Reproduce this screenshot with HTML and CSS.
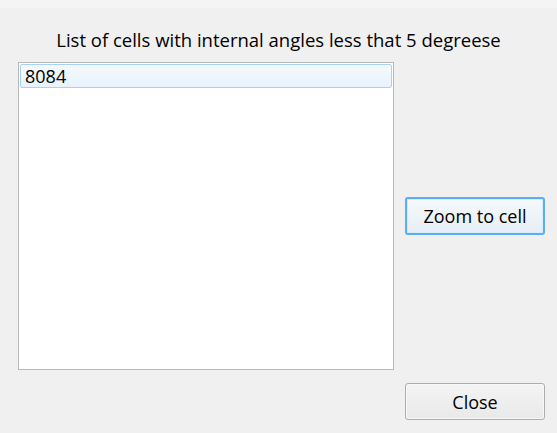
FILE: index.html
```html
<!DOCTYPE html>
<html>
<head>
<meta charset="utf-8">
<link rel="stylesheet" href="styles.css">
</head>
<body>
<div class="window">
  <div class="topbar"></div>
  <div class="content">
    <div class="title">List of cells with internal angles less that 5 degreese</div>
    <div class="main">
      <div class="list">
        <div class="item selected">8084</div>
      </div>
      <div class="side">
        <button class="btn default">Zoom to cell</button>
      </div>
    </div>
    <div class="footer">
      <button class="btn close">Close</button>
    </div>
  </div>
</div>
</body>
</html>
```
FILE: styles.css
```css
html, body {
  margin: 0;
  padding: 0;
}
body {
  background: #f0f0f0;
  font-family: "Open Sans", "Noto Sans", sans-serif;
  font-size: 18px;
  color: #000;
}
.window {
  width: 557px;
  height: 433px;
  background: #f0f0f0;
  overflow: hidden;
}
.topbar {
  height: 8px;
  background: #f4f4f4;
}
.content {
  padding: 0 12px 0 18px;
}
.title {
  padding-top: 20px;
  height: 24px;
  line-height: 24px;
  margin-bottom: 10px;
  text-align: center;
  font-size: 18.5px;
  margin-left: -18px;
  margin-right: -12px;
}
.main {
  display: grid;
  grid-template-columns: 376px 1fr;
  column-gap: 11px;
  height: 308px;
}
.list {
  box-sizing: border-box;
  border: 1px solid #b9b9b9;
  background: #fff;
  padding: 1px;
}
.item {
  height: 24px;
  line-height: 22px;
  box-sizing: border-box;
  padding-left: 4px;
}
.item.selected {
  border: 1px solid #a8d2f4;
  border-radius: 2px;
  background: linear-gradient(#f4f9fe, #e8f3fd);
}
.side {
  display: flex;
  align-items: center;
}
.btn {
  box-sizing: border-box;
  width: 140px;
  font-family: inherit;
  font-size: 18px;
  color: #000;
  padding: 0;
  border-radius: 3px;
}
.btn.default {
  height: 38px;
  border: 2px solid #5aaef4;
  box-shadow: inset 0 0 0 1px #d9ecfb;
  background: linear-gradient(#f5f9fc, #e6eef5);
}
.footer {
  display: flex;
  justify-content: flex-end;
  margin-top: 13px;
}
.btn.close {
  height: 37px;
  border: 1px solid #adadad;
  box-shadow: inset 0 0 0 1px #f8f8f8;
  background: linear-gradient(#f4f4f4, #e9e9e9);
}
```
